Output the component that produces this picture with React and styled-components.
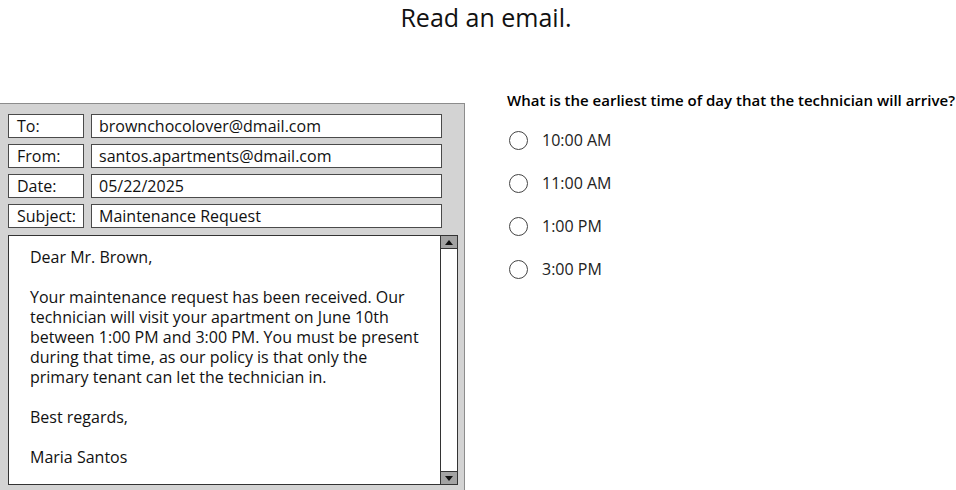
import styled, { createGlobalStyle } from 'styled-components';

const GlobalStyle = createGlobalStyle`
  html, body {
    margin: 0;
    padding: 0;
    background: #fff;
    font-family: "Open Sans", "Noto Sans", sans-serif;
    color: #111;
  }
`;

const Page = styled.div`
  width: 956px;
  height: 490px;
  overflow: hidden;
  display: flex;
  flex-direction: column;
`;

const Title = styled.h1`
  margin: 0;
  text-align: center;
  font-size: 25px;
  font-weight: 400;
  line-height: 34px;
  padding-left: 16px;
`;

const Main = styled.div`
  display: flex;
  align-items: flex-start;
  gap: 42px;
  margin-top: 56px;
`;

const EmailPanel = styled.div`
  width: 456px;
  margin-top: 13px;
  padding: 10px 0 20px 8px;
  background: #d3d3d3;
  border: 1px solid #8c8c8c;
  border-left: none;
  display: flex;
  flex-direction: column;
  gap: 6px;
`;

const HeaderRow = styled.div`
  display: flex;
  gap: 7px;
`;

const Field = styled.div`
  box-sizing: border-box;
  height: 24px;
  width: ${(p) => p.$width}px;
  padding: 0 ${(p) => p.$pad}px;
  background: #fff;
  border: 1px solid #4a4a4a;
  font-size: 16px;
  line-height: 22px;
  white-space: nowrap;
`;

const Body = styled.div`
  margin-top: 1px;
  box-sizing: border-box;
  width: 450px;
  height: 250px;
  display: flex;
  background: #fff;
  border: 1px solid #333;
`;

const BodyText = styled.div`
  flex: 1;
  padding: 11px 12px 0 21px;
  font-size: 16px;
  line-height: 20px;
  white-space: pre-line;
`;

const Scrollbar = styled.div`
  width: 16px;
  border-left: 1px solid #333;
  display: flex;
  flex-direction: column;
  justify-content: space-between;
`;

const ScrollButton = styled.div`
  height: 12px;
  background: #a3a3a3;
  border-top: ${(p) => (p.$down ? '1px solid #333' : 'none')};
  border-bottom: ${(p) => (p.$down ? 'none' : '1px solid #333')};
  display: flex;
  align-items: center;
  justify-content: center;
  &::after {
    content: '';
    width: 0;
    height: 0;
    border-left: 4px solid transparent;
    border-right: 4px solid transparent;
    ${(p) => (p.$down ? 'border-top: 5px solid #111;' : 'border-bottom: 5px solid #111;')}
  }
`;

const Question = styled.div`
  display: flex;
  flex-direction: column;
`;

const Prompt = styled.div`
  font-size: 15px;
  font-weight: 600;
  line-height: 20px;
  color: #000;
  white-space: nowrap;
`;

const Options = styled.div`
  display: flex;
  flex-direction: column;
  gap: 23px;
  margin-top: 20px;
  padding-left: 2px;
`;

const Option = styled.label`
  display: flex;
  align-items: center;
  gap: 14px;
  height: 20px;
  font-size: 16px;
  color: #222;
  cursor: pointer;
`;

const Radio = styled.span`
  box-sizing: border-box;
  width: 19px;
  height: 19px;
  border-radius: 50%;
  border: 1px solid #444;
  background: #fff;
`;

const fields = [
  ['To:', 'brownchocolover@dmail.com'],
  ['From:', 'santos.apartments@dmail.com'],
  ['Date:', '05/22/2025'],
  ['Subject:', 'Maintenance Request'],
];

const letter = `Dear Mr. Brown,

Your maintenance request has been received. Our technician will visit your apartment on June 10th between 1:00 PM and 3:00 PM. You must be present during that time, as our policy is that only the primary tenant can let the technician in.

Best regards,

Maria Santos`;

const answers = ['10:00 AM', '11:00 AM', '1:00 PM', '3:00 PM'];

export default function App() {
  return (
    <Page>
      <GlobalStyle />
      <Title>Read an email.</Title>
      <Main>
        <EmailPanel>
          {fields.map(([label, value]) => (
            <HeaderRow key={label}>
              <Field $width={76} $pad={8}>{label}</Field>
              <Field $width={351} $pad={7}>{value}</Field>
            </HeaderRow>
          ))}
          <Body>
            <BodyText>{letter}</BodyText>
            <Scrollbar>
              <ScrollButton />
              <ScrollButton $down />
            </Scrollbar>
          </Body>
        </EmailPanel>
        <Question>
          <Prompt>What is the earliest time of day that the technician will arrive?</Prompt>
          <Options>
            {answers.map((a) => (
              <Option key={a}>
                <Radio />
                {a}
              </Option>
            ))}
          </Options>
        </Question>
      </Main>
    </Page>
  );
}
